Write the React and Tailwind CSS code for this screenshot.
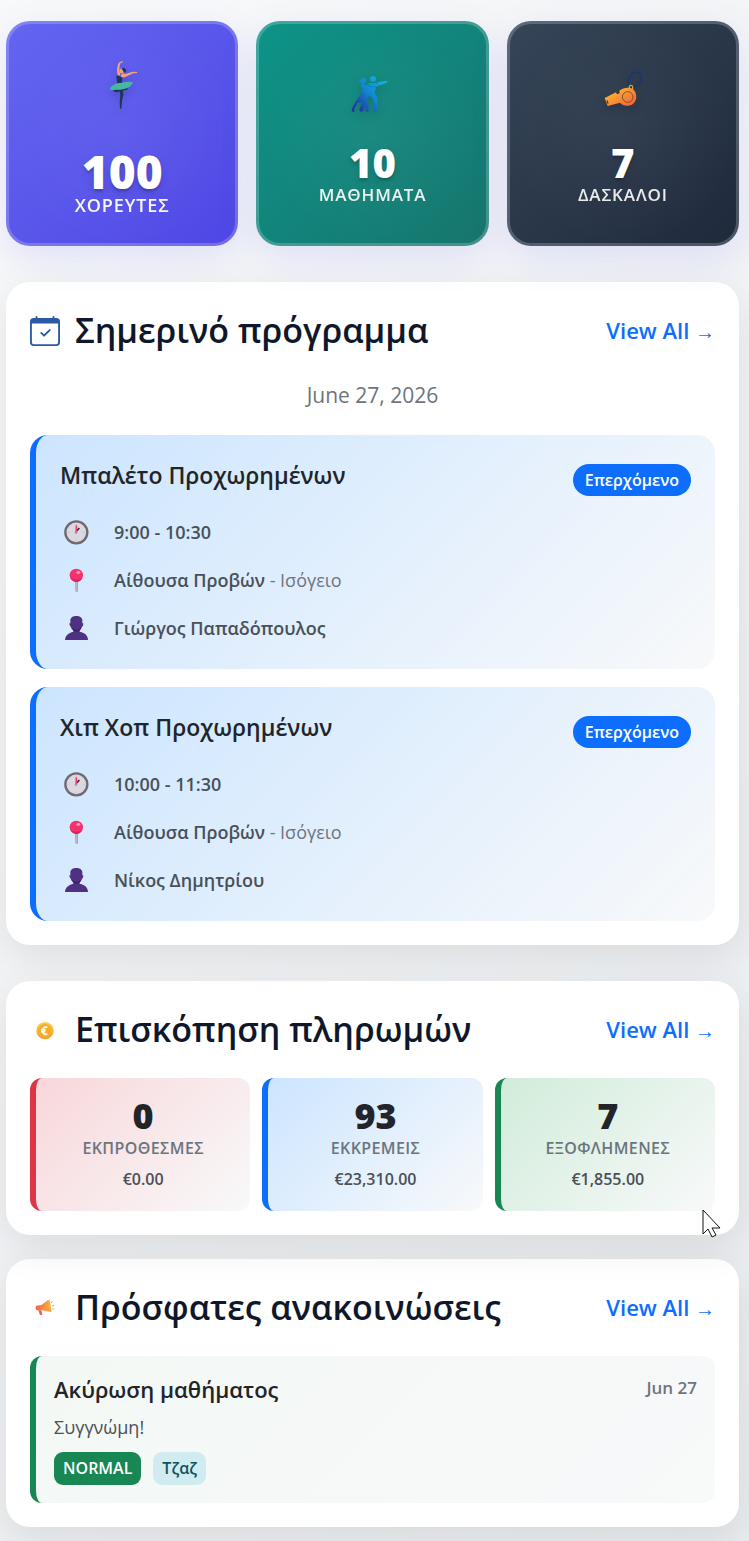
import React from 'react'
import { BsCalendarCheck } from 'react-icons/bs'

const lessons = [
  { id: 1, title: 'Μπαλέτο Προχωρημένων', time: '9:00 - 10:30', room: 'Αίθουσα Προβών', floor: 'Ισόγειο', teacher: 'Γιώργος Παπαδόπουλος' },
  { id: 2, title: 'Χιπ Χοπ Προχωρημένων', time: '10:00 - 11:30', room: 'Αίθουσα Προβών', floor: 'Ισόγειο', teacher: 'Νίκος Δημητρίου' },
]

const payments = [
  { label: 'ΕΚΠΡΟΘΕΣΜΕΣ', count: 0, amount: '€0.00', tone: 'border-[#dc3545] from-[#f8d7da]' },
  { label: 'ΕΚΚΡΕΜΕΙΣ', count: 93, amount: '€23,310.00', tone: 'border-[#0d6efd] from-[#cce5ff]' },
  { label: 'ΕΞΟΦΛΗΜΕΝΕΣ', count: 7, amount: '€1,855.00', tone: 'border-[#198754] from-[#d1ecda]' },
]

function BallerinaIcon() {
  return (
    <svg className="w-[50px] h-[72px] drop-shadow-lg" viewBox="291 153 150 216" fill="none" aria-hidden="true">
      <path d="M354 229C349 213 351 194 359 186L369 183L368 187L361 190C357 200 358 214 361 225Z" fill="#f2a27e" />
      <path d="M362 226L370 220L376 222L398 215L411 216L412 219L400 220L376 231L364 234Z" fill="#f2a27e" />
      <ellipse cx="365" cy="213" rx="6" ry="8" fill="#f2a27e" />
      <path d="M364 207C368 202 375 204 378 209C379 214 376 218 372 217C370 214 369 210 364 207Z" fill="#1d3557" />
      <path d="M349 228L355 226L361 231L367 230L366 250L352 252Z" fill="#1d3557" />
      <path d="M338 267L384 261L381 270L368 271L352 277L342 275Z" fill="#1d3557" />
      <path d="M359 268L369 268L370 286L366 304L364 326L360 326L359 304L361 286Z" fill="#1d3557" />
      <path d="M329 267C334 255 348 249 366 248C380 244 395 245 399 248C392 262 373 270 350 269C342 271 332 270 329 267Z" fill="#45b8a0" />
    </svg>
  )
}

function DancersIcon() {
  return (
    <svg className="w-[60px] h-[60px] drop-shadow-lg" viewBox="277 186 180 180" aria-hidden="true">
      <defs>
        <linearGradient id="dance" gradientUnits="userSpaceOnUse" x1="315" y1="320" x2="400" y2="245">
          <stop offset="0" stopColor="#1e3799" />
          <stop offset="0.5" stopColor="#1283cf" />
          <stop offset="1" stopColor="#10b0df" />
        </linearGradient>
      </defs>
      <g fill="url(#dance)">
        <circle cx="370" cy="237" r="9" />
        <circle cx="341" cy="241" r="8" />
        <circle cx="332" cy="244" r="4" />
        <path d="M335 249L344 250L347 257L357 250L379 249L386 246L411 242L414 247L388 257L379 260L375 280L384 294L384 335L372 335L372 300L360 287L352 299L357 309L357 335L349 335L346 318L342 333L332 335L329 331L336 307L324 308L314 327L315 335L307 335L306 328L319 304L334 281L340 267L334 263Z" />
      </g>
      <path d="M350 252L364 261L381 260M381 249L389 258M360 287L344 311" fill="none" stroke="#1668a8" strokeWidth="1.5" />
    </svg>
  )
}

function WhistleIcon() {
  return (
    <svg className="w-[60px] h-[60px] drop-shadow-lg" viewBox="279 186 180 180" aria-hidden="true">
      <defs>
        <linearGradient id="whistle" x1="0" y1="0" x2="1" y2="1">
          <stop offset="0.3" stopColor="#fca82f" />
          <stop offset="1" stopColor="#f15a3a" />
        </linearGradient>
      </defs>
      <ellipse cx="404" cy="239" rx="18" ry="25" transform="rotate(35 404 239)" fill="none" stroke="#173869" strokeWidth="5" />
      <path d="M388 267V260C389 255 397 255 398 261V268" fill="none" stroke="#e79a35" strokeWidth="4" />
      <path d="M314 294L348 277L351 283L359 280L358 272C370 263 388 260 399 268C412 279 412 300 400 311C388 320 369 319 360 308L323 318Z" fill="url(#whistle)" />
      <circle cx="383" cy="291" r="16" fill="none" stroke="#604638" strokeWidth="2.5" />
      <path d="M321 301L324 311" stroke="#424348" strokeWidth="4" />
    </svg>
  )
}

function EuroIcon() {
  return (
    <svg className="w-[30px] h-[30px]" viewBox="90 106 90 90" aria-hidden="true">
      <defs>
        <linearGradient id="coin" x1="0" y1="0" x2="0" y2="1">
          <stop offset="0" stopColor="#fbd044" />
          <stop offset="1" stopColor="#f39c28" />
        </linearGradient>
      </defs>
      <circle cx="135" cy="153" r="26" fill="url(#coin)" />
      <circle cx="135" cy="153" r="20" fill="#f5ad2b" />
      <path d="M142 144C134 138 128 145 128 153C128 161 134 168 142 162M123 150H137M123 156H136" fill="none" stroke="#fffaf0" strokeWidth="5" />
    </svg>
  )
}

function MegaphoneIcon() {
  return (
    <svg className="w-[30px] h-[30px]" viewBox="90 130 90 90" aria-hidden="true">
      <defs>
        <linearGradient id="horn" x1="0" y1="0" x2="1" y2="0">
          <stop offset="0" stopColor="#f0644a" />
          <stop offset="1" stopColor="#fbb03b" />
        </linearGradient>
      </defs>
      <path d="M109 168L124 166L145 150L152 187L128 182L110 182C106 178 106 172 109 168Z" fill="url(#horn)" />
      <path d="M115 182L124 182L127 195L120 196Z" fill="#ee5f46" />
      <path d="M145 150L149 152L155 186L151 188Z" fill="#f9a13a" />
      <path d="M153 160L158 154M156 169L162 167M157 177L162 179" stroke="#8cc66d" strokeWidth="3" />
    </svg>
  )
}

function ClockIcon() {
  return (
    <svg className="w-8 h-8 shrink-0" viewBox="120 48 96 96" aria-hidden="true">
      <circle cx="169" cy="97" r="33" fill="#dcd8e0" stroke="#6f6972" strokeWidth="7" />
      <path d="M169 71v5M169 118v5M143 97h5M190 97h5" stroke="#b9b4bd" strokeWidth="2" />
      <path d="M167 96L178 84" stroke="#34244e" strokeWidth="5" />
      <path d="M169 99V76" stroke="#f8395f" strokeWidth="5" />
      <circle cx="168" cy="98" r="4" fill="#a59dad" />
    </svg>
  )
}

function PinIcon() {
  return (
    <svg className="w-8 h-8 shrink-0" viewBox="120 192 96 96" aria-hidden="true">
      <path d="M165 240h9v34q-4 4-8 0z" fill="#aaa3b8" />
      <path d="M169 240v35" stroke="#cbc5d5" strokeWidth="2" />
      <circle cx="169" cy="226" r="20" fill="#f5316b" />
      <ellipse cx="175" cy="217" rx="6" ry="5" fill="#ff9aad" />
      <path d="M151 234q8 12 20 12q11-2 15-12q-15 10-35 0z" fill="#d6245e" />
    </svg>
  )
}

function PersonIcon() {
  return (
    <svg className="w-8 h-8 shrink-0" viewBox="120 336 96 96" aria-hidden="true">
      <path d="M151 361C151 344 187 344 187 361V370H190Q190 379 186 380Q183 388 179 391V395C196 399 204 407 204 420H135C136 406 145 399 160 395V391Q154 387 152 380Q148 378 148 370H151Z" fill="#4f3083" />
      <path d="M154 382q15 16 31 0q-4 9-7 10q-9 6-18 0z" fill="#3a2263" />
    </svg>
  )
}

function SectionCard({ icon, title, className = '', children }) {
  return (
    <section className={`rounded-[24px] bg-white p-6 shadow-[0_12px_42px_rgba(0,0,0,0.09)] ${className}`}>
      <div className="flex items-center justify-between mb-6">
        <h2 className="flex items-center gap-[15px] text-[34px] leading-[49px] font-semibold text-[#0f172a]">
          {icon}
          {title}
        </h2>
        <a href="#" className="text-[22px] leading-8 font-semibold text-[#0d6efd] whitespace-nowrap">
          View All <span className="font-['Liberation_Sans',sans-serif] text-xl leading-8 font-normal">→</span>
        </a>
      </div>
      {children}
    </section>
  )
}

export default function App() {
  return (
    <main className="min-h-screen bg-linear-135 from-[#f8f9fa] to-[#e9ecef] pt-[21px] pb-[14px] pl-[6px] pr-[10px] font-['Open_Sans','Noto_Sans',sans-serif]">
      <div className="grid grid-cols-3 gap-[18px] mb-9 text-center text-white">
        <div className="h-[225px] flex flex-col items-center justify-center rounded-[24px] border-3 border-white/20 bg-[radial-gradient(circle,rgba(255,255,255,0.04),transparent_70%),linear-gradient(135deg,#6366f1,#4f46e5)] bg-origin-border shadow-[0_12px_36px_rgba(99,102,241,0.15)]">
          <BallerinaIcon />
          <div className="mt-6 text-[46px] leading-[48px] font-extrabold text-shadow-lg">100</div>
          <div className="text-[18px] leading-[21px] font-semibold tracking-wider opacity-95">ΧΟΡΕΥΤΕΣ</div>
        </div>
        <div className="h-[225px] flex flex-col items-center justify-center rounded-[24px] border-3 border-white/20 bg-[radial-gradient(circle,rgba(255,255,255,0.04),transparent_70%),linear-gradient(135deg,#0d9488,#17756d)] bg-origin-border shadow-[0_12px_36px_rgba(99,102,241,0.15)]">
          <DancersIcon />
          <div className="mt-5 text-[40px] leading-[42px] font-extrabold text-shadow-lg">10</div>
          <div className="text-[17px] leading-[21px] font-semibold tracking-wider opacity-90">ΜΑΘΗΜΑΤΑ</div>
        </div>
        <div className="h-[225px] flex flex-col items-center justify-center rounded-[24px] border-3 border-white/20 bg-[radial-gradient(circle,rgba(255,255,255,0.04),transparent_70%),linear-gradient(135deg,#364558,#1e293b)] bg-origin-border shadow-[0_12px_36px_rgba(99,102,241,0.15)]">
          <WhistleIcon />
          <div className="mt-5 text-[40px] leading-[42px] font-extrabold text-shadow-lg">7</div>
          <div className="text-[17px] leading-[21px] font-semibold tracking-wider opacity-90">ΔΑΣΚΑΛΟΙ</div>
        </div>
      </div>

      <SectionCard title="Σημερινό πρόγραμμα" className="mb-9" icon={<BsCalendarCheck className="w-[30px] h-[30px] text-[#2a5aa3]" />}>
        <p className="mb-6 text-center text-[21px] leading-8 text-[#6c757d]">June 27, 2026</p>
        <div className="flex flex-col gap-[18px]">
          {lessons.map(l => (
            <article key={l.id} className="rounded-[18px] border-l-6 border-[#0d6efd] bg-linear-135 from-[#cce5ff] to-[#f8f9fa] px-6 pt-6 pb-[23px]">
              <div className="flex items-start justify-between mb-[18px]">
                <h3 className="text-[23px] leading-8 font-semibold text-[#212529]">{l.title}</h3>
                <span className="mt-[5px] rounded-full bg-[#0d6efd] px-3 text-base leading-8 font-semibold text-white">Επερχόμενο</span>
              </div>
              <div className="flex flex-col gap-3 text-[18px] leading-9 font-semibold text-[#495057]">
                <div className="flex items-center gap-[22px]"><ClockIcon /><span>{l.time}</span></div>
                <div className="flex items-center gap-[22px]">
                  <PinIcon />
                  <span>{l.room} <span className="font-normal text-[#6c757d]">- {l.floor}</span></span>
                </div>
                <div className="flex items-center gap-[22px]"><PersonIcon /><span>{l.teacher}</span></div>
              </div>
            </article>
          ))}
        </div>
      </SectionCard>

      <div className="relative mb-6">
        <SectionCard title="Επισκόπηση πληρωμών" icon={<EuroIcon />}>
          <div className="grid grid-cols-3 gap-3 text-center">
            {payments.map(p => (
              <div key={p.label} className={`rounded-[12px] border-l-6 bg-linear-135 to-[#f8f9fa] py-[18px] ${p.tone}`}>
                <div className="text-4xl leading-10 font-extrabold text-[#212529]">{p.count}</div>
                <div className="text-base leading-6 font-semibold tracking-wide text-[#6c757d]">{p.label}</div>
                <div className="mt-[6px] text-base leading-[27px] font-semibold text-[#495057]">{p.amount}</div>
              </div>
            ))}
          </div>
        </SectionCard>
        <svg className="absolute right-[17px] -bottom-[4px] w-5 h-[30px]" viewBox="0 0 20 30" aria-hidden="true">
          <path d="M1 1V25L6 20L10 28L14 26L10 19H18Z" fill="#fff" stroke="#111" strokeWidth="1" />
        </svg>
      </div>

      <SectionCard title="Πρόσφατες ανακοινώσεις" icon={<MegaphoneIcon />}>
        <article className="rounded-[12px] border-l-6 border-[#198754] bg-linear-135 from-[#f3f8f5] to-[#f8f9fa] p-[18px]">
          <div className="flex items-start justify-between">
            <h3 className="text-[22px] leading-[30px] font-semibold text-[#212529]">Ακύρωση μαθήματος</h3>
            <time className="text-[17px] leading-[27px] font-semibold text-[#6c757d]">Jun 27</time>
          </div>
          <p className="mt-[10px] mb-[11px] text-[18px] leading-[27px] text-[#495057]">Συγγνώμη!</p>
          <div className="flex gap-3 text-base leading-[33px] font-semibold">
            <span className="rounded-[9px] bg-[#198754] px-[9px] text-white">NORMAL</span>
            <span className="rounded-[9px] bg-[#d1ecf1] px-[9px] text-[#0c5460]">Τζαζ</span>
          </div>
        </article>
      </SectionCard>
    </main>
  )
}
